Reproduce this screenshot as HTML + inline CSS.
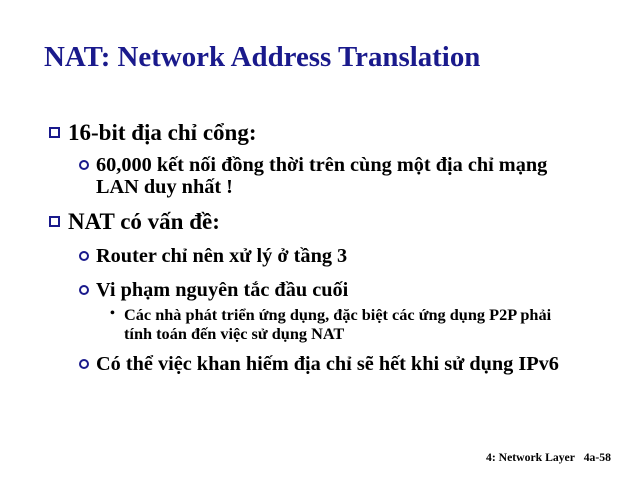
<!DOCTYPE html><html><head><meta charset="utf-8"><style>
body{margin:0;width:640px;height:480px;background:#fff;position:relative;overflow:hidden;font-family:"Liberation Serif","Noto Serif CJK SC",serif;color:#000}
.a{position:absolute;white-space:nowrap;line-height:1}
.t{left:44px;top:43px;font-size:28.9px;font-weight:bold;color:#1a1a8c}
.l1{font-size:23px;font-weight:bold;left:68px}
.l2{font-size:20.3px;font-weight:bold;left:96px}
.l3{font-size:16.3px;font-weight:bold;left:124px}
.sq{position:absolute;width:11px;height:11px;border:2px solid #1a1a8c;box-sizing:border-box;left:49px}
.ci{position:absolute;width:10px;height:10px;border:2px solid #1a1a8c;border-radius:50%;box-sizing:border-box;left:79px}
</style></head><body>
<div class="a t">NAT: Network Address Translation</div>
<div class="sq" style="top:127px"></div><div class="a l1" style="top:121px">16-bit địa chỉ cổng:</div>
<div class="ci" style="top:160px"></div><div class="a l2" style="top:155px">60,000 kết nối đồng thời trên cùng một địa chỉ mạng</div>
<div class="a l2" style="top:177px">LAN duy nhất !</div>
<div class="sq" style="top:216px"></div><div class="a l1" style="top:210px">NAT có vấn đề:</div>
<div class="ci" style="top:251px"></div><div class="a l2" style="top:246px">Router chỉ nên xử lý ở tầng 3</div>
<div class="ci" style="top:285px"></div><div class="a l2" style="top:280px">Vi phạm nguyên tắc đầu cuối</div>
<div class="a" style="left:110px;top:307px;font-size:14px;font-weight:bold">•</div>
<div class="a l3" style="top:307px">Các nhà phát triển ứng dụng, đặc biệt các ứng dụng P2P phải</div>
<div class="a l3" style="top:326px">tính toán đến việc sử dụng NAT</div>
<div class="ci" style="top:359px"></div><div class="a l2" style="top:354px">Có thể việc khan hiếm địa chỉ sẽ hết khi sử dụng IPv6</div>
<div class="a" style="left:486px;top:452px;font-size:11.7px;font-weight:bold">4: Network Layer&nbsp;&nbsp;&nbsp;4a-58</div>
</body></html>
